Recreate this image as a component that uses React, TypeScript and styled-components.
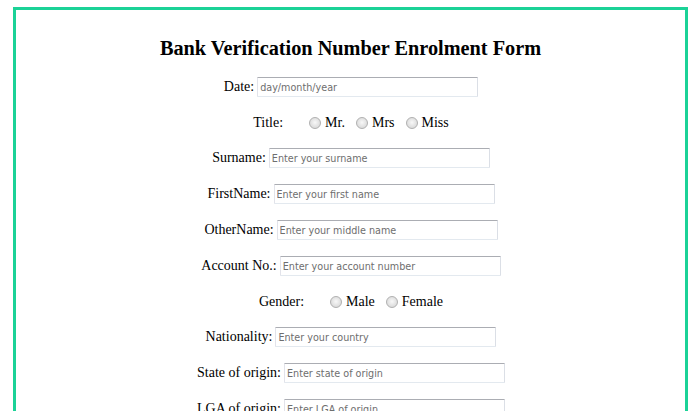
import React from "react";
import styled, { createGlobalStyle } from "styled-components";

const Global = createGlobalStyle`
  html, body { margin: 0; padding: 0; background: #fff; }
  body { font-family: "Liberation Serif", "Times New Roman", serif; color: #000; }
`;

const Frame = styled.div`
  margin: 7px 12px 0 13px;
  border: 3px solid #1bd297;
  border-bottom: none;
  height: 420px;
  box-sizing: border-box;
  overflow: hidden;
`;

const Heading = styled.h2`
  margin: 27px 0 9px;
  font-size: 20.3px;
  line-height: 23px;
  font-weight: bold;
  text-align: center;
  font-family: "Liberation Serif", "Times New Roman", serif;
`;

const Row = styled.div<{ $h: number }>`
  display: flex;
  justify-content: center;
  align-items: center;
  height: ${(p) => p.$h}px;
  padding-left: 1px;
`;

const Label = styled.label<{ $gap: number }>`
  font-size: 14px;
  margin-right: ${(p) => p.$gap}px;
  white-space: nowrap;
`;

const TextInput = styled.input`
  width: 221px;
  height: 20px;
  box-sizing: border-box;
  padding: 1px 2px;
  border: 1px solid;
  border-color: #abadb3 #dbdfe6 #e3e9ef #e2e3ea;
  border-radius: 1px;
  font-family: "DejaVu Sans Condensed", "Liberation Sans", Arial, sans-serif;
  font-size: 10.7px;
  outline: none;
  &::placeholder { color: #6e6e6e; }
`;

const Option = styled.label<{ $first?: boolean }>`
  display: inline-flex;
  align-items: center;
  font-size: 14px;
  margin-left: ${(p) => (p.$first ? 0 : 11)}px;
`;

const Radio = styled.input.attrs({ type: "radio" })`
  appearance: none;
  -webkit-appearance: none;
  width: 12px;
  height: 12px;
  margin: 0 4px 0 0;
  border-radius: 50%;
  border: 1px solid #b0b0b0;
  box-sizing: border-box;
  background: radial-gradient(circle at 50% 45%, #f8f8f8 0, #e6e6e6 45%, #d2d2d2 100%);
`;

const fields: [string, string][] = [
  ["Surname:", "Enter your surname"],
  ["FirstName:", "Enter your first name"],
  ["OtherName:", "Enter your middle name"],
  ["Account No.:", "Enter your account number"],
];

const fields2: [string, string][] = [
  ["Nationality:", "Enter your country"],
  ["State of origin:", "Enter state of origin"],
  ["LGA of origin:", "Enter LGA of origin"],
];

const InputRow = ({ label, ph }: { label: string; ph: string }) => (
  <Row $h={36}>
    <Label $gap={3}>{label}</Label>
    <TextInput placeholder={ph} />
  </Row>
);

const RadioRow = ({ label, name, opts }: { label: string; name: string; opts: string[] }) => (
  <Row $h={35}>
    <Label $gap={26}>{label}</Label>
    {opts.map((o, i) => (
      <Option key={o} $first={i === 0}>
        <Radio name={name} />
        {o}
      </Option>
    ))}
  </Row>
);

export default function App() {
  return (
    <>
      <Global />
      <Frame>
        <Heading>Bank Verification Number Enrolment Form</Heading>
        <InputRow label="Date:" ph="day/month/year" />
        <RadioRow label="Title:" name="title" opts={["Mr.", "Mrs", "Miss"]} />
        {fields.map(([l, p]) => (
          <InputRow key={l} label={l} ph={p} />
        ))}
        <RadioRow label="Gender:" name="gender" opts={["Male", "Female"]} />
        {fields2.map(([l, p]) => (
          <InputRow key={l} label={l} ph={p} />
        ))}
      </Frame>
    </>
  );
}
